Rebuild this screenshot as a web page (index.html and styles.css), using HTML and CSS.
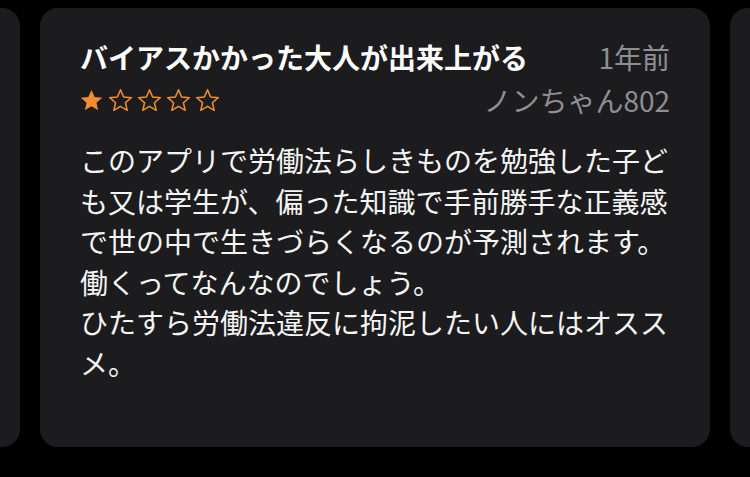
FILE: index.html
```html
<!DOCTYPE html>
<html lang="ja">
<head>
<meta charset="utf-8">
<link rel="stylesheet" href="styles.css">
</head>
<body>
<div class="strip">
  <div class="card card-left"></div>
  <div class="card card-main">
    <div class="row head">
      <div class="title">バイアスかかった大人が出来上がる</div>
      <div class="meta">1年前</div>
    </div>
    <div class="row sub">
      <div class="stars">
        <svg class="star" viewBox="0.6 0.4 22.8 21.6"><path class="fill" d="M12 1.2l3.1 7 7.6.7-5.8 5 1.7 7.5L12 17.5l-6.6 3.9 1.7-7.5-5.8-5 7.6-.7z"/></svg>
        <svg class="star" viewBox="0.6 0.4 22.8 21.6"><path class="line" d="M12 1.2l3.1 7 7.6.7-5.8 5 1.7 7.5L12 17.5l-6.6 3.9 1.7-7.5-5.8-5 7.6-.7z"/></svg>
        <svg class="star" viewBox="0.6 0.4 22.8 21.6"><path class="line" d="M12 1.2l3.1 7 7.6.7-5.8 5 1.7 7.5L12 17.5l-6.6 3.9 1.7-7.5-5.8-5 7.6-.7z"/></svg>
        <svg class="star" viewBox="0.6 0.4 22.8 21.6"><path class="line" d="M12 1.2l3.1 7 7.6.7-5.8 5 1.7 7.5L12 17.5l-6.6 3.9 1.7-7.5-5.8-5 7.6-.7z"/></svg>
        <svg class="star" viewBox="0.6 0.4 22.8 21.6"><path class="line" d="M12 1.2l3.1 7 7.6.7-5.8 5 1.7 7.5L12 17.5l-6.6 3.9 1.7-7.5-5.8-5 7.6-.7z"/></svg>
      </div>
      <div class="meta">ノンちゃん802</div>
    </div>
    <p class="body">このアプリで労働法らしきものを勉強した子ども又は学生が、偏った知識で手前勝手な正義感で世の中で生きづらくなるのが予測されます。<br>働くってなんなのでしょう。<br>ひたすら労働法違反に拘泥したい人にはオススメ。</p>
  </div>
  <div class="card card-right"></div>
</div>
</body>
</html>
```

FILE: styles.css
```css
html, body {
  margin: 0;
  padding: 0;
  background: #000;
}
body {
  width: 750px;
  height: 477px;
  overflow: hidden;
  font-family: "Noto Sans CJK JP", "Noto Sans", sans-serif;
  color: #fff;
}
.strip {
  display: flex;
  gap: 20px;
  padding-top: 8px;
}
.card {
  background: #1c1c1e;
  height: 439px;
  box-sizing: border-box;
}
.card-left {
  flex: 0 0 20px;
  border-radius: 0 18px 18px 0;
}
.card-right {
  flex: 0 0 20px;
  border-radius: 18px 0 0 18px;
}
.card-main {
  flex: 0 0 670px;
  border-radius: 18px;
  padding: 32px 40px 0 40px;
}
.row {
  display: flex;
  justify-content: space-between;
  align-items: center;
  line-height: 34px;
  font-size: 28px;
}
.sub {
  margin-top: 9px;
}
.title {
  font-weight: 700;
  white-space: nowrap;
}
.meta {
  color: #8e8e93;
  white-space: nowrap;
}
.stars {
  display: flex;
  gap: 6px;
  height: 34px;
  align-items: center;
}
.star {
  width: 23px;
  height: 22px;
  display: block;
}
.fill {
  fill: #f28c30;
}
.line {
  fill: none;
  stroke: #f28c30;
  stroke-width: 1.5;
  stroke-linejoin: miter;
}
.body {
  margin: 23px 0 0 0;
  font-size: 28px;
  line-height: 40.5px;
  color: #f5f5f5;
}
```
